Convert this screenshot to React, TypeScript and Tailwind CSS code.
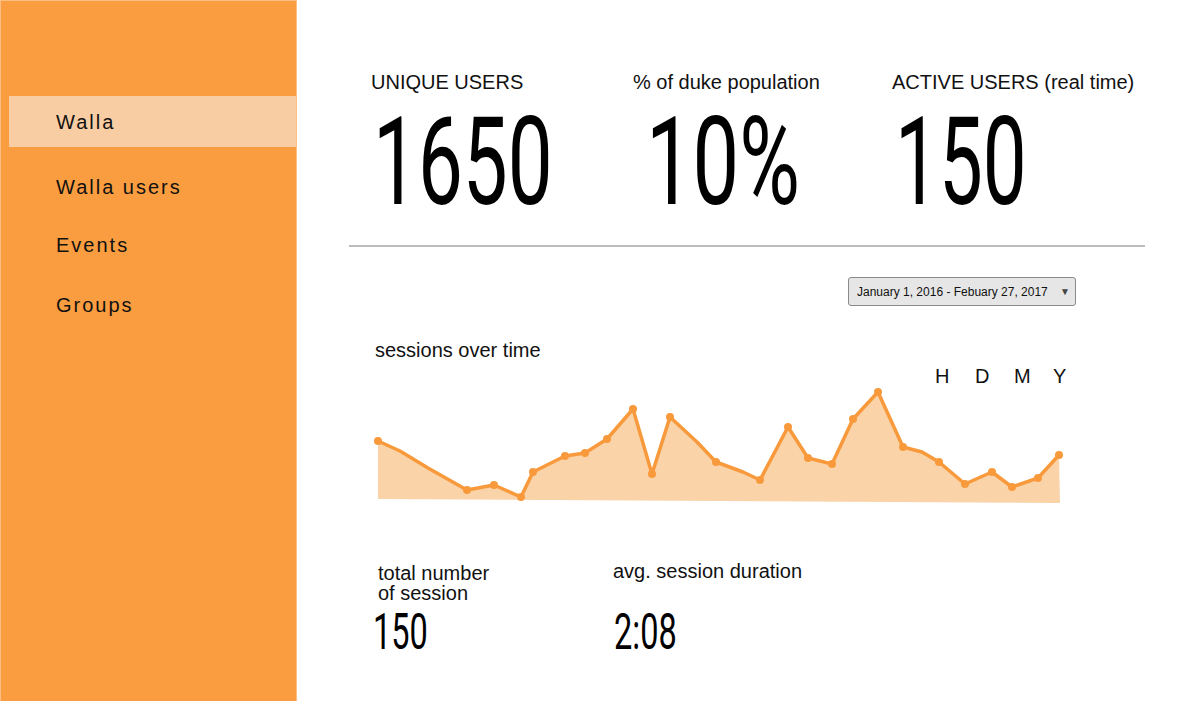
import React from "react";

const pts: [number, number, boolean][] = [
  [378, 441, true], [400, 451, false], [428, 468, false], [467, 490, true], [494, 485, true],
  [521, 497, true], [533, 472, true], [565, 456, true], [585, 453, true], [607, 439, true],
  [633, 409, true], [652, 474, true], [670, 417, true], [697, 442, false], [716, 462, true],
  [743, 472, false], [760, 480, true], [788, 427, true], [808, 458, true], [832, 464, true],
  [853, 419, true], [878, 392, true], [903, 447, true], [922, 452, false], [939, 462, true],
  [965, 484, true], [992, 472, true], [1012, 487, true], [1038, 478, true], [1059, 455, true],
];

const OX = 370;
const OY = 388;

function Chart() {
  const line = pts.map(([x, y]) => `${x - OX},${y - OY}`).join(" ");
  const fill = `${line} ${1060 - OX},${503 - OY} ${378 - OX},${499 - OY}`;
  return (
    <svg width="700" height="120" viewBox="0 0 700 120" className="block ml-[73px] overflow-visible">
      <polygon points={fill} fill="#fad3a8" />
      <polyline points={line} fill="none" stroke="#f89a3c" strokeWidth="3.5" strokeLinejoin="round" strokeLinecap="round" />
      {pts.filter((p) => p[2]).map(([x, y], i) => (
        <circle key={i} cx={x - OX} cy={y - OY} r="4" fill="#f89a3c" />
      ))}
    </svg>
  );
}

const big = { fontFamily: 'Roboto, "Liberation Sans", sans-serif' };

export default function App() {
  const font = { fontFamily: '"Liberation Sans", Arial, sans-serif' };
  return (
    <div className="flex w-[1201px] h-[701px] bg-white text-[#111] overflow-hidden" style={font}>
      <aside className="w-[297px] h-full shrink-0 bg-[#f99d40] border-l border-t border-r border-[#fbbf85]">
        <div className="pt-[95px]">
          <div className="ml-[8px] h-[51px] bg-[#f9cda3] flex items-center pl-[47px] text-[20px] leading-[24px] tracking-[2px]">
            Walla
          </div>
          <div className="pl-[55px] mt-[28px] text-[20px] leading-[24px] tracking-[2px]">Walla users</div>
          <div className="pl-[55px] mt-[34px] text-[20px] leading-[24px] tracking-[2px]">Events</div>
          <div className="pl-[55px] mt-[36px] text-[20px] leading-[24px] tracking-[2px]">Groups</div>
        </div>
      </aside>

      <main className="flex-1 flex flex-col">
        <div className="pl-[74px] pt-[70px] grid grid-cols-[262px_259px_1fr]">
          <div>
            <div className="text-[20px] leading-[24px] whitespace-nowrap">UNIQUE USERS</div>
            <div style={big} className="mt-[8px] ml-[2px] h-[122px] text-[122px] leading-[122px] font-normal text-black origin-left scale-x-[0.655] whitespace-nowrap">
              1650
            </div>
          </div>
          <div>
            <div className="text-[20px] leading-[24px] whitespace-nowrap">% of duke population</div>
            <div style={big} className="mt-[8px] ml-[13px] h-[122px] text-[122px] leading-[122px] font-normal text-black origin-left scale-x-[0.68] whitespace-nowrap">
              10%
            </div>
          </div>
          <div>
            <div className="text-[20px] leading-[24px] whitespace-nowrap">ACTIVE USERS (real time)</div>
            <div style={big} className="mt-[8px] ml-[3px] h-[122px] text-[122px] leading-[122px] font-normal text-black origin-left scale-x-[0.64] whitespace-nowrap">
              150
            </div>
          </div>
        </div>

        <div className="mt-[21px] ml-[52px] mr-[56px] h-[2px] bg-[#bdbdbd]" />

        <div className="mt-[30px] ml-[551px] w-[228px] h-[29px] bg-[#e6e6e6] border border-[#8a8a8a] rounded-[3px] flex items-center justify-between pl-[8px] pr-[5px]">
          <span className="text-[12px] leading-[14px] whitespace-nowrap">January 1, 2016 - Febuary 27, 2017</span>
          <span className="text-[10px] leading-[10px] text-[#444]">▼</span>
        </div>

        <div className="mt-[32px] ml-[78px] text-[20px] leading-[24px]">sessions over time</div>

        <div className="mt-[2px] ml-[638px] grid grid-cols-[40px_39px_39px_auto] text-[20px] leading-[24px]">
          <span>H</span>
          <span>D</span>
          <span>M</span>
          <span>Y</span>
        </div>

        <Chart />

        <div className="mt-[55px] ml-[81px] grid grid-cols-[235px_auto] items-start">
          <div>
            <div className="text-[20px] leading-[20px]">
              total number
              <br />
              of session
            </div>
            <div style={big} className="mt-[4px] -ml-[5px] h-[50px] text-[50px] leading-[50px] font-normal text-black origin-left scale-x-[0.65] whitespace-nowrap">
              150
            </div>
          </div>
          <div className="-mt-[2px]">
            <div className="text-[20px] leading-[20px] whitespace-nowrap">avg. session duration</div>
            <div style={big} className="mt-[26px] ml-[1px] h-[50px] text-[50px] leading-[50px] font-normal text-black origin-left scale-x-[0.65] whitespace-nowrap">
              2:08
            </div>
          </div>
        </div>
      </main>
    </div>
  );
}
